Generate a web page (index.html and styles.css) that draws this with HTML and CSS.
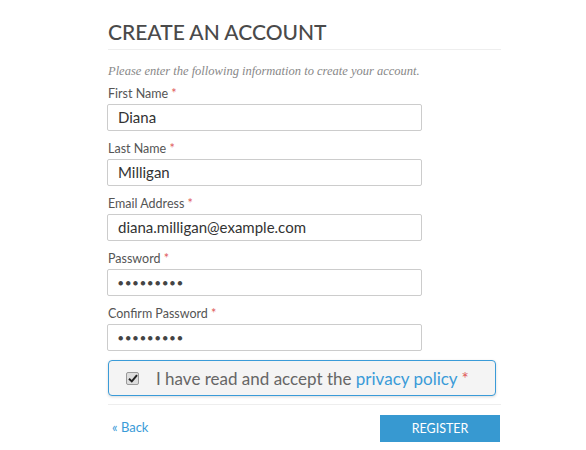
FILE: index.html
```html
<!DOCTYPE html>
<html>
<head>
<meta charset="utf-8">
<link rel="stylesheet" href="styles.css">
</head>
<body>
<div class="page">
  <h1 class="title">CREATE AN ACCOUNT</h1>
  <p class="intro">Please enter the following information to create your account.</p>
  <form class="form">
    <div class="field">
      <label class="label">First Name <span class="req">*</span></label>
      <div class="input">Diana</div>
    </div>
    <div class="field">
      <label class="label">Last Name <span class="req">*</span></label>
      <div class="input">Milligan</div>
    </div>
    <div class="field">
      <label class="label">Email Address <span class="req">*</span></label>
      <div class="input">diana.milligan@example.com</div>
    </div>
    <div class="field">
      <label class="label">Password <span class="req">*</span></label>
      <div class="input dots">●●●●●●●●●</div>
    </div>
    <div class="field">
      <label class="label">Confirm Password <span class="req">*</span></label>
      <div class="input dots">●●●●●●●●●</div>
    </div>
    <div class="consent">
      <span class="check"><svg width="10" height="9" viewBox="0 0 10 9"><path d="M1 4.8 L3.8 7.4 L9 1.2" fill="none" stroke="#222" stroke-width="2"/></svg></span>
      <span class="consent-text">I have read and accept the <a class="link">privacy policy</a> <span class="req">*</span></span>
    </div>
    <div class="actions">
      <a class="back">« Back</a>
      <button type="button" class="register">REGISTER</button>
    </div>
  </form>
</div>
</body>
</html>
```
FILE: styles.css
```css
html, body { margin: 0; padding: 0; background: #fff; }
body { font-family: Lato, "Open Sans", sans-serif; color: #555; }
.page { margin-left: 108px; width: 393px; padding-top: 19px; }
.title {
  margin: 0; font-size: 21px; font-weight: 500; color: #4a4a4a;
  letter-spacing: 0; padding-bottom: 5px; border-bottom: 1px solid #eee; line-height: 25px;
}
.intro {
  margin: 14px 0 0 0; font-family: "Liberation Serif", Georgia, serif; font-style: italic;
  font-size: 12.5px; color: #888; line-height: 14px;
}
.form { display: flex; flex-direction: column; margin-top: 8px; }
.field { display: flex; flex-direction: column; margin-bottom: 10px; }
.label { font-size: 12.5px; color: #555; line-height: 15px; margin-bottom: 3px; }
.req { color: #e05a5a; }
.input {
  box-sizing: border-box; width: 315px; height: 27px; margin-left: -1px;
  border: 1px solid #ccc; border-radius: 2px; padding: 0 10px;
  font-size: 15px; line-height: 25px; color: #333;
}
.dots { font-size: 9px; letter-spacing: 2px; color: #444; }
.consent {
  box-sizing: border-box; width: 388px; height: 36px; margin-top: -1px;
  border: 1px solid #3a9bd8; border-radius: 4px; background: #f4f4f4;
  box-shadow: 0 1px 3px rgba(0,0,0,0.15);
  display: flex; align-items: center; padding-left: 17px;
}
.check {
  box-sizing: border-box; width: 13px; height: 13px; border: 1px solid #999; border-radius: 2px;
  background: #ddd; display: flex; align-items: center; justify-content: center; margin-right: 17px;
}
.consent-text { font-size: 17px; color: #666; }
.link { color: #3a9bd8; }
.actions {
  margin-top: 8px; border-top: 1px solid #eee; padding-top: 10px;
  display: flex; justify-content: space-between; align-items: center;
}
.back { color: #3a9bd8; font-size: 13px; margin-left: 4px; margin-bottom: 3px; }
.register {
  width: 120px; height: 27px; border: none; background: #3799d1; color: #fff;
  font-family: Lato, sans-serif; font-size: 12.5px; margin-right: 1px;
}
```
